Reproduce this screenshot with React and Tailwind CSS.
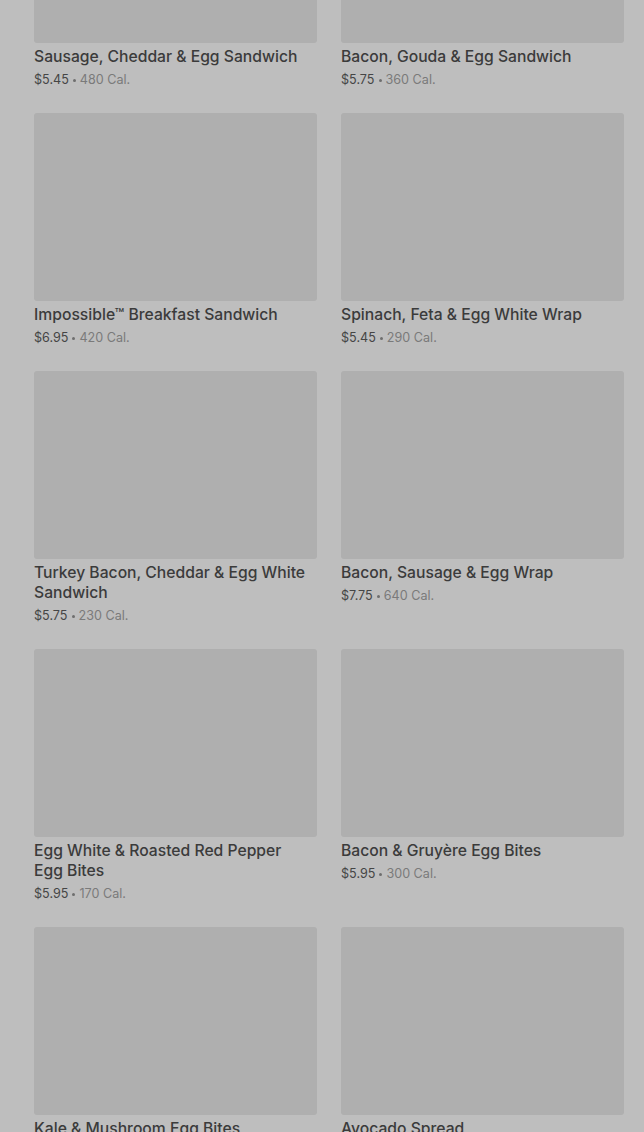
const ITEMS = [
  { name: 'Sausage, Cheddar & Egg Sandwich', price: '$5.45', cal: '480' },
  { name: 'Bacon, Gouda & Egg Sandwich', price: '$5.75', cal: '360' },
  { name: 'Impossible™ Breakfast Sandwich', price: '$6.95', cal: '420' },
  { name: 'Spinach, Feta & Egg White Wrap', price: '$5.45', cal: '290' },
  { name: 'Turkey Bacon, Cheddar & Egg White Sandwich', price: '$5.75', cal: '230' },
  { name: 'Bacon, Sausage & Egg Wrap', price: '$7.75', cal: '640' },
  { name: 'Egg White & Roasted Red Pepper Egg Bites', price: '$5.95', cal: '170' },
  { name: 'Bacon & Gruyère Egg Bites', price: '$5.95', cal: '300' },
  { name: 'Kale & Mushroom Egg Bites', price: '$5.45', cal: '230' },
  { name: 'Avocado Spread', price: '$1.25', cal: '90' },
]

function MenuCard({ item }) {
  return (
    <div className="mb-[23px]">
      <div className="h-[188px] rounded-[3px] bg-[#afafaf]" />
      <div className="pt-[4px] pr-[6px] text-[15.7px] leading-[20px] font-medium text-[#3b3b3b]">
        {item.name}
      </div>
      <div className="mt-[3px] text-[12.6px] leading-[20px] text-[#7a7a7a]">
        <span className="text-[#454545]">{item.price}</span>
        {/* small centred dot between price and calories */}
        <span className="mx-[4px] inline-block h-[3px] w-[3px] rounded-full bg-[#6e6e6e] align-middle" />
        {item.cal} Cal.
      </div>
    </div>
  )
}

export default function App() {
  return (
    <div
      className="h-[1132px] overflow-hidden bg-[#bebebe]"
      style={{ fontFamily: 'Inter, Roboto, "Noto Sans", sans-serif' }}
    >
      <div className="mt-[-145px] grid grid-cols-2 gap-x-[24px] pl-[34px] pr-[20px]">
        {ITEMS.map((item) => (
          <MenuCard key={item.name} item={item} />
        ))}
      </div>
    </div>
  )
}
